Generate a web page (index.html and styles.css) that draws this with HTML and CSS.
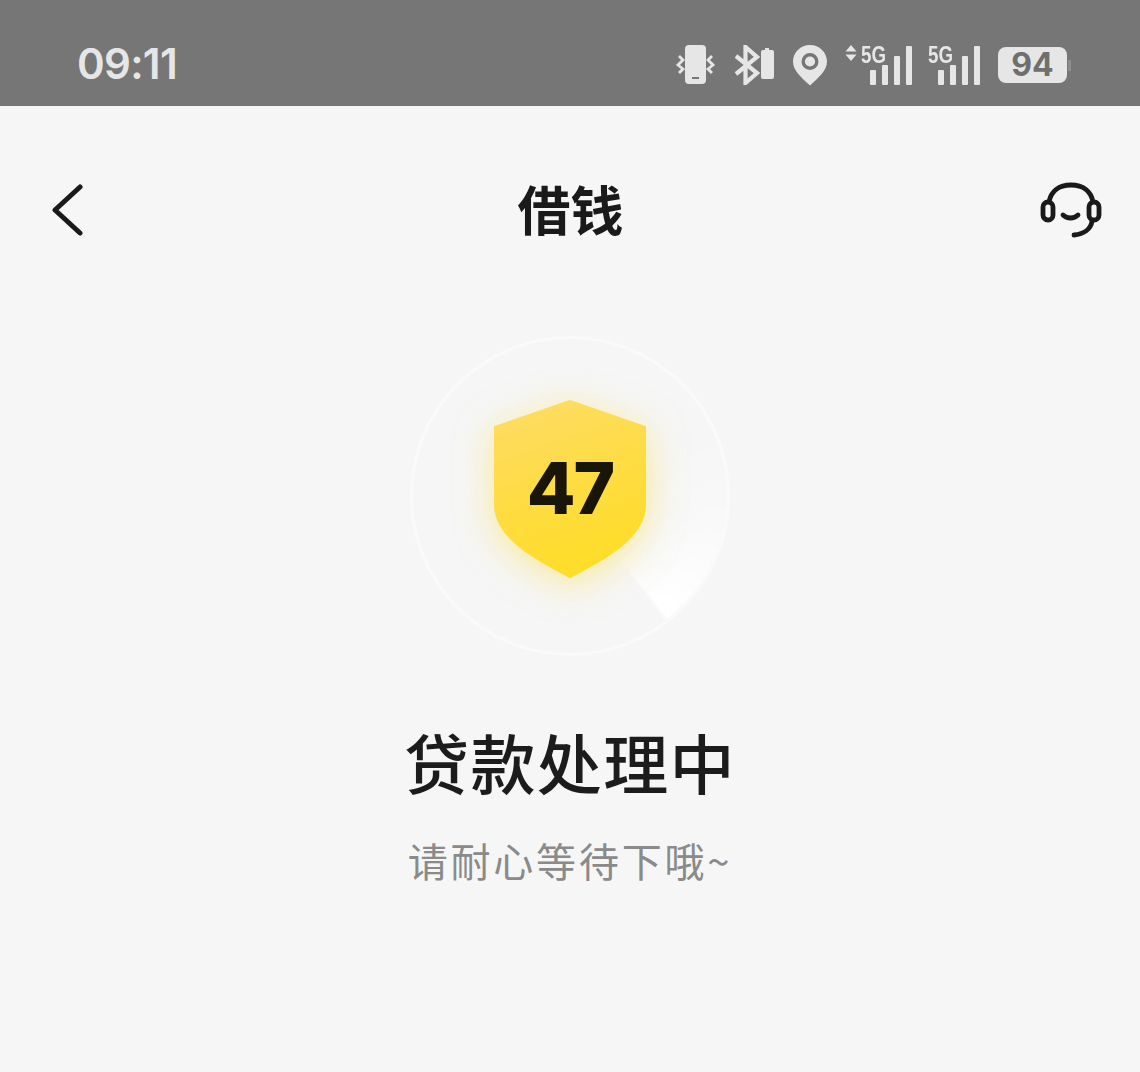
FILE: index.html
```html
<!DOCTYPE html>
<html lang="zh">
<head>
<meta charset="utf-8">
<title>借钱</title>
<link rel="stylesheet" href="styles.css">
</head>
<body>
<div class="status">
  <span class="time">09:11</span>
  <div class="status-icons">
    <svg width="41" height="40" viewBox="0 0 41 40">
      <rect x="10" y="0" width="21" height="39" rx="4" fill="#e6e6e6"/>
      <rect x="17" y="32" width="7" height="2" fill="#777"/>
      <path d="M4 11l4 4-5 5 5 4-4 4M37 11l-4 4 5 5-5 4 4 4" fill="none" stroke="#e6e6e6" stroke-width="2.800"/>
    </svg>
    <svg width="41" height="40" viewBox="0 0 41 40">
      <path d="M2 11L23 28 11.500 38V2L23 12 2 29" fill="none" stroke="#e6e6e6" stroke-width="4.200"/>
      <path d="M27 7q0-2 2-2h2V3h4v2h3q2 0 2 2v25q0 2-2 2H29q-2 0-2-2z" fill="#e6e6e6"/>
    </svg>
    <svg width="34" height="41" viewBox="0 0 34 41">
      <path d="M17 0C7.500 0 0 7.500 0 16.500 0 26 9 33 17 40.500 25 33 34 26 34 16.500 34 7.500 26.500 0 17 0z" fill="#e6e6e6"/>
      <circle cx="17" cy="16.500" r="6.800" fill="none" stroke="#767676" stroke-width="3.400"/>
    </svg>
    <div class="signal wide">
      <svg class="arrows" width="12" height="16" viewBox="0 0 12 16"><path d="M6 0l5.500 6.500H.500zM6 16l5.500-6.500H.500z" fill="#e6e6e6"/></svg>
      <span class="five">5G</span>
      <i class="b b1"></i><i class="b b2"></i><i class="b b3"></i><i class="b b4"></i>
    </div>
    <div class="signal">
      <span class="five">5G</span>
      <i class="b b1"></i><i class="b b2"></i><i class="b b3"></i><i class="b b4"></i>
    </div>
    <div class="battery"><span>94</span></div>
  </div>
</div>
<div class="nav">
  <svg class="back" width="32" height="52" viewBox="0 0 32 52"><path d="M29 3L4 26l25 23" fill="none" stroke="#1a1a1a" stroke-width="5" stroke-linecap="round" stroke-linejoin="round"/></svg>
  <h1>借钱</h1>
  <svg class="help" width="62" height="56" viewBox="0 0 62 56">
    <path d="M9 20C11 9 19 3 31 3s20 6 22 17" fill="none" stroke="#1a1a1a" stroke-width="4.800"/>
    <rect x="3" y="20" width="10" height="18" rx="5" fill="none" stroke="#1a1a1a" stroke-width="4.800"/>
    <rect x="49" y="20" width="10" height="18" rx="5" fill="none" stroke="#1a1a1a" stroke-width="4.800"/>
    <path d="M23 33c4 4 11 4 15 0" fill="none" stroke="#1a1a1a" stroke-width="4.800" stroke-linecap="round"/>
    <path d="M52 39c-1 8-8 13-18 14" fill="none" stroke="#1a1a1a" stroke-width="4.800" stroke-linecap="round"/>
  </svg>
</div>
<div class="progress">
  <div class="ring">
    <div class="sweep"></div>
    <svg class="shield-svg" width="154" height="180" viewBox="0 0 154 180">
      <defs><linearGradient id="g" x1="0.300" y1="0" x2="0.600" y2="1"><stop offset="0" stop-color="#fedc62"/><stop offset="0.500" stop-color="#fedc42"/><stop offset="1" stop-color="#fedd26"/></linearGradient></defs>
      <path d="M77 2L152 28V106C152 138 112 160 77 178 42 160 2 138 2 106V28z" fill="url(#g)" stroke="url(#g)" stroke-width="2" stroke-linejoin="round"/>
    </svg>
    <span class="num">47</span>
  </div>
  <h2>贷款处理中</h2>
  <p>请耐心等待下哦~</p>
</div>
</body>
</html>
```
FILE: styles.css
```css
* { box-sizing: border-box; }
html, body { margin: 0; }
body {
  width: 1140px;
  height: 1072px;
  overflow: hidden;
  background: #f6f6f6;
  font-family: "Noto Sans CJK SC", "Noto Sans", sans-serif;
}
.status {
  height: 106px;
  background: #767676;
  display: flex;
  align-items: center;
  justify-content: space-between;
  padding: 24px 73px 0 77px;
  color: #e6e6e6;
}
.time {
  font: 600 42px/1 Inter, sans-serif;
  letter-spacing: -0.7px;
  margin-top: -2px;
}
.status-icons {
  display: flex;
  align-items: center;
  gap: 18px;
}
.signal {
  position: relative;
  width: 52px;
  height: 40px;
  display: flex;
  align-items: flex-end;
  justify-content: flex-end;
  gap: 6px;
}
.signal.wide { width: 67px; margin-right: -2px; }
.arrows { position: absolute; left: 0; top: 0; }
.five {
  position: absolute;
  left: 0;
  top: -2px;
  font: 700 24px/1 "Liberation Sans", sans-serif;
  transform: scaleX(0.78);
  transform-origin: left top;
}
.wide .five { left: 16px; }
.b { display: block; width: 6px; background: #e6e6e6; border-radius: 1px; }
.b1 { height: 15px; }
.b2 { height: 20px; }
.b3 { height: 29px; }
.b4 { height: 39px; }
.battery {
  width: 69px;
  height: 36px;
  background: #e6e6e6;
  border-radius: 8px;
  display: flex;
  align-items: center;
  justify-content: center;
  color: #6f6f6f;
  font: 700 32px/1 Inter, sans-serif;
  position: relative;
}
.battery::after {
  content: "";
  position: absolute;
  right: -4px;
  top: 13px;
  width: 3px;
  height: 11px;
  background: #8d8d8d;
}
.nav {
  display: grid;
  grid-template-columns: 1fr auto 1fr;
  align-items: center;
  padding: 0 38px 0 51px;
  margin-top: 76px;
  height: 52px;
}
.help { justify-self: end; }
.nav h1 {
  margin: -5px 0 0;
  font-size: 53px;
  line-height: 52px;
  font-weight: 700;
  color: #1a1a1a;
  transform: translateX(-6px);
}
.progress {
  display: flex;
  flex-direction: column;
  align-items: center;
  margin-top: 102px;
}
.ring {
  position: relative;
  width: 320px;
  height: 320px;
  border-radius: 50%;
  border: 3px solid #fafafa;
  display: flex;
  align-items: center;
  justify-content: center;
  overflow: hidden;
}
.sweep {
  position: absolute;
  inset: 0;
  border-radius: 50%;
  background: conic-gradient(from 60deg, rgba(255,255,255,0) 0deg, rgba(255,255,255,0.35) 40deg, #fff 81deg, rgba(255,255,255,0) 83deg);
  -webkit-mask-image: radial-gradient(circle, transparent 30%, #000 62%);
  mask-image: radial-gradient(circle, transparent 30%, #000 62%);
}
.shield-svg {
  position: relative;
  margin-top: -14px;
  filter: drop-shadow(0 7px 18px rgba(254, 221, 60, 0.5));
}
.num {
  position: absolute;
  left: 0;
  right: 0;
  top: 114px;
  text-align: center;
  font: 800 71px/1 Inter, sans-serif;
  letter-spacing: -2px;
  color: #1a1509;
}
.progress h2 {
  margin: 65px 0 0;
  font-size: 65px;
  line-height: 80px;
  font-weight: 500;
  letter-spacing: 1.4px;
  color: #1c1c1c;
}
.progress p {
  margin: 34px 0 0;
  font-size: 40px;
  line-height: 50px;
  font-weight: 400;
  letter-spacing: 2.8px;
  color: #8a8a8a;
}
```
